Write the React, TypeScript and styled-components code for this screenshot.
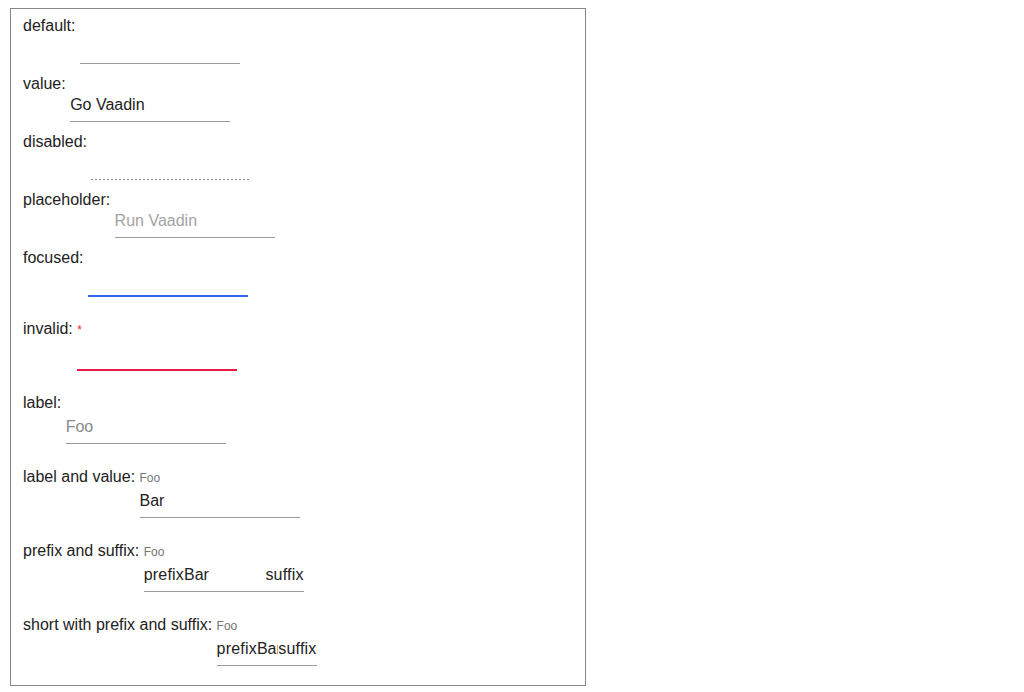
import React from 'react';
import styled, { createGlobalStyle } from 'styled-components';

const GlobalStyle = createGlobalStyle`
  body {
    margin: 0;
    background: #fff;
    color: #222;
    font-family: "Liberation Sans", Arial, sans-serif;
  }
`;

const Demo = styled.div`
  width: 576px;
  box-sizing: border-box;
  margin: 8px 0 0 10px;
  padding: 7px 12px;
  border: 1px solid #888;
`;

const Row = styled.div<{ $space: number }>`
  display: flex;
  align-items: flex-start;
  margin-bottom: ${(p) => p.$space}px;
  font-size: 16px;
  line-height: 18px;
`;

const RowLabel = styled.span`
  padding-top: 1px;
  margin-right: 4.45px;
  white-space: nowrap;
`;

const Field = styled.div<{ $width: number }>`
  display: flex;
  flex-direction: column;
  flex: none;
  width: ${(p) => p.$width}px;
`;

const FieldLabel = styled.div<{ $tall: boolean }>`
  height: ${(p) => (p.$tall ? 21 : 18)}px;
  box-sizing: border-box;
  padding-top: 2px;
  font-size: 12px;
  line-height: 18px;
  color: #757575;
`;

const Required = styled.span`
  color: #f0204d;
`;

type State = 'idle' | 'focused' | 'invalid' | 'disabled';

const lineColor: Record<State, string> = {
  idle: '#999',
  focused: '#3366ee',
  invalid: '#f01a4a',
  disabled: '#999',
};

const InputRow = styled.div<{ $state: State }>`
  display: flex;
  padding: 4px 0 7px;
  border-bottom: ${(p) =>
    p.$state === 'disabled'
      ? '1px solid transparent'
      : `${p.$state === 'idle' ? 1 : 2}px solid ${lineColor[p.$state]}`};
  ${(p) =>
    p.$state === 'disabled' &&
    `
    background-image: repeating-linear-gradient(to right, #8c8c8c 0 2px, transparent 2px 4px);
    background-size: 100% 1px;
    background-position: left bottom;
    background-repeat: no-repeat;
    background-origin: border-box;
  `}
`;

const Input = styled.input<{ $hint: string }>`
  flex: 1;
  width: 0;
  min-width: 0;
  height: 18px;
  margin: 0;
  padding: 0;
  border: 0;
  outline: none;
  background: transparent;
  font: inherit;
  color: #222;
  &::placeholder {
    color: ${(p) => p.$hint};
    opacity: 1;
  }
`;

const Affix = styled.span`
  flex: none;
  letter-spacing: 0.2px;
  color: #222;
`;

type Demo = {
  label: string;
  fieldLabel?: string;
  required?: boolean;
  tall?: boolean;
  value?: string;
  placeholder?: string;
  hint?: string;
  state?: State;
  prefix?: string;
  suffix?: string;
  width?: number;
  space: number;
};

const rows: Demo[] = [
  { label: 'default:', space: 10 },
  { label: 'value:', value: 'Go Vaadin', space: 10 },
  { label: 'disabled:', state: 'disabled', space: 10 },
  { label: 'placeholder:', placeholder: 'Run Vaadin', hint: '#a3a3a3', space: 10 },
  { label: 'focused:', state: 'focused', space: 22 },
  { label: 'invalid:', required: true, tall: true, state: 'invalid', space: 22 },
  { label: 'label:', tall: true, placeholder: 'Foo', hint: '#888', space: 23 },
  { label: 'label and value:', fieldLabel: 'Foo', tall: true, value: 'Bar', space: 23 },
  {
    label: 'prefix and suffix:',
    fieldLabel: 'Foo',
    tall: true,
    value: 'Bar',
    prefix: 'prefix',
    suffix: 'suffix',
    space: 23,
  },
  {
    label: 'short with prefix and suffix:',
    fieldLabel: 'Foo',
    tall: true,
    value: 'Bar',
    prefix: 'prefix',
    suffix: 'suffix',
    width: 100,
    space: 12,
  },
];

export default function App() {
  return (
    <>
      <GlobalStyle />
      <Demo>
        {rows.map((r) => (
          <Row key={r.label} $space={r.space}>
            <RowLabel>{r.label}</RowLabel>
            <Field $width={r.width ?? 160}>
              <FieldLabel $tall={!!r.tall}>
                {r.required ? <Required>*</Required> : r.fieldLabel ?? '\u00a0'}
              </FieldLabel>
              <InputRow $state={r.state ?? 'idle'}>
                {r.prefix && <Affix>{r.prefix}</Affix>}
                <Input
                  readOnly
                  defaultValue={r.value}
                  placeholder={r.placeholder}
                  disabled={r.state === 'disabled'}
                  $hint={r.hint ?? '#999'}
                />
                {r.suffix && <Affix>{r.suffix}</Affix>}
              </InputRow>
            </Field>
          </Row>
        ))}
      </Demo>
    </>
  );
}
